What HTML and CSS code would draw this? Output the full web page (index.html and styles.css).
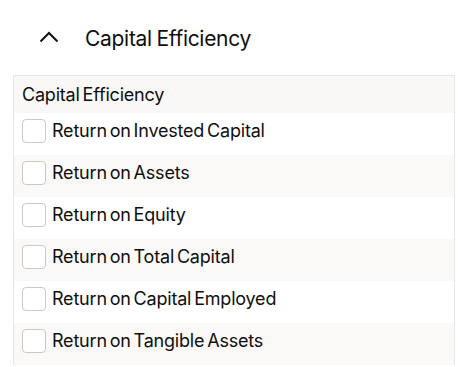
FILE: index.html
```html
<!DOCTYPE html>
<html lang="en">
<head>
  <meta charset="UTF-8">
  <meta name="viewport" content="width=device-width, initial-scale=1.0">
  <title>Capital Efficiency</title>
  <link rel="stylesheet" href="styles.css">
</head>
<body>
  <div class="section">
    <div class="section-title">
      <svg class="chevron" width="20" height="12" viewBox="0 0 20 12">
        <path d="M1.5 10.5 L10 2 L18.5 10.5" fill="none" stroke="#111" stroke-width="2"/>
      </svg>
      <span>Capital Efficiency</span>
    </div>

    <div class="panel">
      <div class="panel-head">Capital Efficiency</div>
      <label class="option"><span class="box"></span>Return on Invested Capital</label>
      <label class="option shaded"><span class="box"></span>Return on Assets</label>
      <label class="option"><span class="box"></span>Return on Equity</label>
      <label class="option shaded"><span class="box"></span>Return on Total Capital</label>
      <label class="option"><span class="box"></span>Return on Capital Employed</label>
      <label class="option shaded"><span class="box"></span>Return on Tangible Assets</label>
    </div>
  </div>
</body>
</html>
```

FILE: styles.css
```css
html, body {
  margin: 0;
  padding: 0;
  background: #fff;
}

body {
  font-family: Inter, "Open Sans", sans-serif;
  color: #0f0f0f;
}

.section {
  padding: 0 3px 0 13px;
}

.section-title {
  display: flex;
  align-items: center;
  height: 77px;
  padding-left: 26px;
  box-sizing: border-box;
  font-size: 21px;
  letter-spacing: -0.3px;
  word-spacing: -1px;
}

.chevron {
  margin-right: 26px;
  margin-top: -3px;
}

.panel {
  border: 1px solid #e8e6e3;
  border-bottom: none;
  margin-top: -2px;
}

.panel-head {
  height: 37px;
  display: flex;
  align-items: center;
  padding-left: 8px;
  background: #f9f8f6;
  font-size: 18px;
  letter-spacing: -0.2px;
  word-spacing: -2px;
}

.option {
  display: flex;
  align-items: center;
  height: 42px;
  box-sizing: border-box;
  padding: 0 0 7px 8px;
  font-size: 18px;
  letter-spacing: -0.2px;
  word-spacing: -2px;
}

.option.shaded {
  background: #faf9f7;
}

.box {
  width: 22px;
  height: 22px;
  border: 1px solid #cdc8c2;
  border-radius: 4px;
  background: #fff;
  margin-right: 6px;
}
```
